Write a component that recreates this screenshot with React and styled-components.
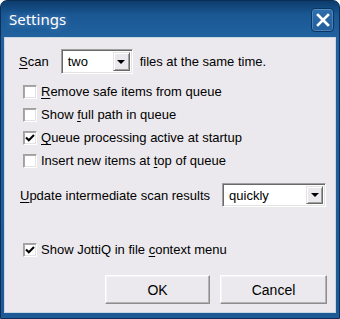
import React from "react";
import styled, { createGlobalStyle } from "styled-components";

const Global = createGlobalStyle`
  html, body { margin: 0; padding: 0; background: #ffffff; }
  body { font-family: "Liberation Sans", Arial, sans-serif; }
`;

const Window = styled.div`
  width: 340px;
  height: 319px;
  box-sizing: border-box;
  display: flex;
  flex-direction: column;
  background: linear-gradient(180deg, #0d3c6c 0px, #1a5894 14px, #21629f 36px, #1d5a96 100%);
  border: 1px solid #0a2e55;
  border-radius: 7px 7px 0 0;
  padding: 0 3px 5px 3px;
`;

const TitleBar = styled.div`
  height: 36px;
  flex: none;
  display: flex;
  align-items: center;
  justify-content: space-between;
  padding: 0 2px 0 5px;
`;

const Title = styled.span`
  font-family: "Noto Sans", "Open Sans", sans-serif;
  font-size: 15px;
  color: #ffffff;
  text-shadow: 0 0 6px rgba(160, 200, 255, 0.55);
  margin-top: -1px;
`;

const CloseButton = styled.div`
  width: 23px;
  height: 24px;
  box-sizing: border-box;
  border: 1px solid #0b3563;
  border-radius: 4px;
  background: linear-gradient(180deg, #2f6fac 0%, #225f9c 100%);
  box-shadow: inset 0 0 0 1px rgba(120, 170, 220, 0.45);
  display: flex;
  align-items: center;
  justify-content: center;
  margin-top: 2px;
`;

const Content = styled.div`
  flex: 1;
  background: #ebe9ed;
  border: 1px solid #c9d6e3;
  display: flex;
  flex-direction: column;
  padding: 0 0 0 14px;
  font-size: 13px;
  color: #000;
`;

const ScanRow = styled.div`
  display: flex;
  align-items: center;
  height: 25px;
  margin-top: 11px;
`;

const Label = styled.span`
  white-space: nowrap;
  margin: ${(p) => p.$margin || "0"};
`;

const Combo = styled.div`
  width: ${(p) => p.$width}px;
  height: ${(p) => p.$height}px;
  box-sizing: border-box;
  display: flex;
  align-items: stretch;
  background: #ffffff;
  border-style: solid;
  border-width: 1px;
  border-color: #a0a0a0 #ffffff #ffffff #a0a0a0;
  box-shadow: inset 1px 1px 0 #696969, inset -1px -1px 0 #e3e3e3;
  padding: 2px;
  margin: ${(p) => p.$margin || "0"};
`;

const ComboText = styled.span`
  flex: 1;
  display: flex;
  align-items: center;
  padding-left: 4px;
`;

const DropButton = styled.div`
  width: 17px;
  box-sizing: border-box;
  background: #ebe9ed;
  border-style: solid;
  border-width: 1px;
  border-color: #e3e3e3 #696969 #696969 #e3e3e3;
  box-shadow: inset 1px 1px 0 #ffffff, inset -1px -1px 0 #a0a0a0;
  display: flex;
  align-items: center;
  justify-content: center;
`;

const Arrow = styled.div`
  width: 0;
  height: 0;
  border-left: 4px solid transparent;
  border-right: 4px solid transparent;
  border-top: 4px solid #000;
`;

const CheckRow = styled.label`
  display: flex;
  align-items: center;
  height: 23px;
  margin: ${(p) => p.$margin || "0"};
  padding-left: 4px;
`;

const Box = styled.span`
  width: 14px;
  height: 14px;
  box-sizing: border-box;
  background: #ffffff;
  border-style: solid;
  border-width: 1px;
  border-color: #a0a0a0 #ffffff #ffffff #a0a0a0;
  box-shadow: inset 1px 1px 0 #a8a8a8, inset -1px -1px 0 #e3e3e3;
  display: flex;
  align-items: center;
  justify-content: center;
  margin-right: 4px;
  flex: none;
`;

const UpdateRow = styled.div`
  display: flex;
  align-items: center;
  height: 24px;
  margin-top: 11px;
  padding-left: 1px;
`;

const ButtonRow = styled.div`
  display: flex;
  justify-content: flex-end;
  gap: 10px;
  margin-top: 14px;
  padding-right: 8px;
`;

const Button = styled.div`
  width: ${(p) => p.$width}px;
  height: 29px;
  box-sizing: border-box;
  background: #ebe9ed;
  border-style: solid;
  border-width: 1px;
  border-color: #ffffff #8e8e8e #8e8e8e #ffffff;
  box-shadow: inset -1px -1px 0 #b4b4b4, inset 1px 1px 0 #f4f3f5;
  display: flex;
  align-items: center;
  justify-content: center;
  font-size: 14px;
`;

const U = styled.span`
  text-decoration: underline;
  text-underline-offset: 2px;
`;

const Check = () => (
  <svg width="10" height="10" viewBox="0 0 10 10">
    <path d="M1 4.5 L3.8 7.3 L9 2" fill="none" stroke="#000" strokeWidth="2" />
  </svg>
);

const CheckItem = ({ checked, children, margin }) => (
  <CheckRow $margin={margin}>
    <Box>{checked && <Check />}</Box>
    <Label>{children}</Label>
  </CheckRow>
);

export default function App() {
  return (
    <>
      <Global />
      <Window>
        <TitleBar>
          <Title>Settings</Title>
          <CloseButton>
            <svg width="14" height="14" viewBox="0 0 14 14">
              <path d="M2 2 L12 12 M12 2 L2 12" stroke="#fff" strokeWidth="2.6" strokeLinecap="square" />
            </svg>
          </CloseButton>
        </TitleBar>
        <Content>
          <ScanRow>
            <Label><U>S</U>can</Label>
            <Combo $width={72} $height={25} $margin="0 0 0 12px">
              <ComboText>two</ComboText>
              <DropButton><Arrow /></DropButton>
            </Combo>
            <Label $margin="0 0 0 7px">files at the same time.</Label>
          </ScanRow>
          <CheckItem margin="6px 0 0 0"><U>R</U>emove safe items from queue</CheckItem>
          <CheckItem>Show <U>f</U>ull path in queue</CheckItem>
          <CheckItem checked><U>Q</U>ueue processing active at startup</CheckItem>
          <CheckItem>Insert new items at <U>t</U>op of queue</CheckItem>
          <UpdateRow>
            <Label><U>U</U>pdate intermediate scan results</Label>
            <Combo $width={104} $height={24} $margin="0 0 0 12px">
              <ComboText>quickly</ComboText>
              <DropButton><Arrow /></DropButton>
            </Combo>
          </UpdateRow>
          <CheckItem checked margin="31px 0 0 0">Show JottiQ in file <U>c</U>ontext menu</CheckItem>
          <ButtonRow>
            <Button $width={105}>OK</Button>
            <Button $width={107}>Cancel</Button>
          </ButtonRow>
        </Content>
      </Window>
    </>
  );
}
